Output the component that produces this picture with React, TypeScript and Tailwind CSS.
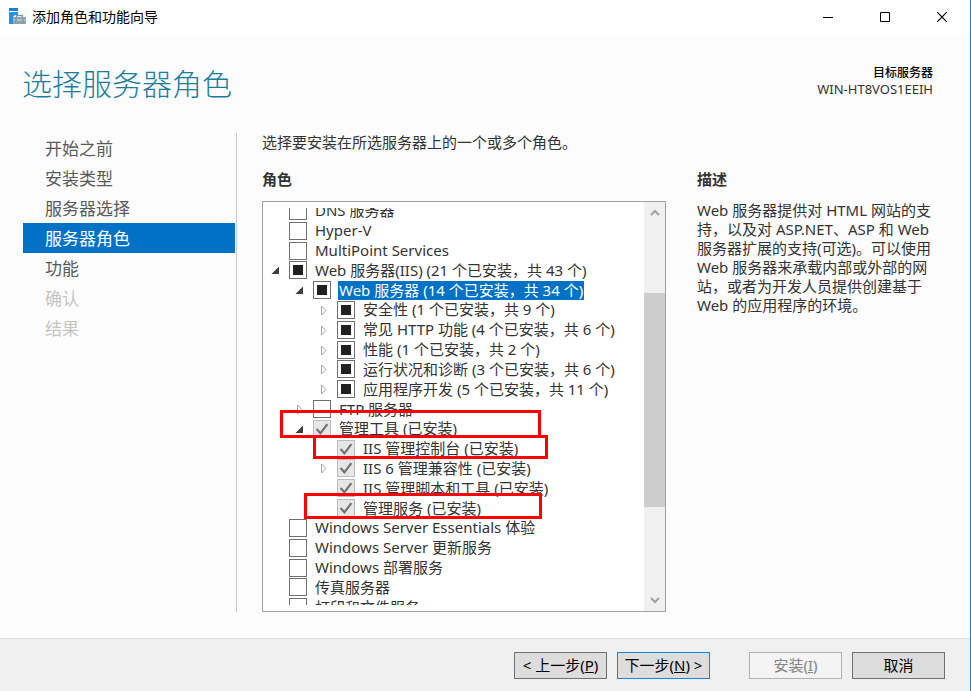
import { clsx } from "clsx";

type CheckState = "empty" | "partial" | "installed";
type ArrowState = "open" | "closed";

interface Role {
  label: string;
  level: 0 | 1 | 2;
  state: CheckState;
  arrow?: ArrowState;
  selected?: boolean;
}

const steps = [
  { label: "开始之前" },
  { label: "安装类型" },
  { label: "服务器选择" },
  { label: "服务器角色", active: true },
  { label: "功能" },
  { label: "确认", disabled: true },
  { label: "结果", disabled: true },
];

const roles: Role[] = [
  { label: "DNS 服务器", level: 0, state: "empty" },
  { label: "Hyper-V", level: 0, state: "empty" },
  { label: "MultiPoint Services", level: 0, state: "empty" },
  { label: "Web 服务器(IIS) (21 个已安装，共 43 个)", level: 0, state: "partial", arrow: "open" },
  { label: "Web 服务器 (14 个已安装，共 34 个)", level: 1, state: "partial", arrow: "open", selected: true },
  { label: "安全性 (1 个已安装，共 9 个)", level: 2, state: "partial", arrow: "closed" },
  { label: "常见 HTTP 功能 (4 个已安装，共 6 个)", level: 2, state: "partial", arrow: "closed" },
  { label: "性能 (1 个已安装，共 2 个)", level: 2, state: "partial", arrow: "closed" },
  { label: "运行状况和诊断 (3 个已安装，共 6 个)", level: 2, state: "partial", arrow: "closed" },
  { label: "应用程序开发 (5 个已安装，共 11 个)", level: 2, state: "partial", arrow: "closed" },
  { label: "FTP 服务器", level: 1, state: "empty", arrow: "closed" },
  { label: "管理工具 (已安装)", level: 1, state: "installed", arrow: "open" },
  { label: "IIS 管理控制台 (已安装)", level: 2, state: "installed" },
  { label: "IIS 6 管理兼容性 (已安装)", level: 2, state: "installed", arrow: "closed" },
  { label: "IIS 管理脚本和工具 (已安装)", level: 2, state: "installed" },
  { label: "管理服务 (已安装)", level: 2, state: "installed" },
  { label: "Windows Server Essentials 体验", level: 0, state: "empty" },
  { label: "Windows Server 更新服务", level: 0, state: "empty" },
  { label: "Windows 部署服务", level: 0, state: "empty" },
  { label: "传真服务器", level: 0, state: "empty" },
  { label: "打印和文件服务", level: 0, state: "empty" },
];

const indent = { 0: "pl-2", 1: "pl-8", 2: "pl-14" };

function WizardIcon() {
  return (
    <svg width="18" height="18" viewBox="0 0 18 18" fill="none">
      <path d="M0 0h9v3H0z" fill="#1c84cf" />
      <path d="M0 4h9v3H6L4 9v7H0z" fill="#2793dd" />
      <path d="M7.500 9.500V7.500h6v2" stroke="#8297a6" strokeWidth="1.300" />
      <rect x="4" y="9" width="13" height="7" rx="1" fill="#8da2b0" />
      <path d="M4.500 12h12" stroke="#dce5ea" />
      <path d="M7 11v2M14 11v2" stroke="#5f7888" />
    </svg>
  );
}

function Arrow({ state }: { state: ArrowState }) {
  return (
    <button type="button" aria-label={state === "open" ? "折叠" : "展开"}>
      <svg width="9" height="10" viewBox="0 0 9 10">
        {state === "open" ? (
          <path d="M8 1.500V9H0.500z" fill="#3c3c3c" />
        ) : (
          <path d="M2.500 1l4.500 4.500L2.500 10z" fill="#fff" stroke="#a3a3a3" />
        )}
      </svg>
    </button>
  );
}

function CheckBox({ id, state }: { id: string; state: CheckState }) {
  return (
    <span className="relative grid size-[18px] shrink-0 place-items-center">
      <input
        id={id}
        type="checkbox"
        defaultChecked={state === "installed"}
        disabled={state === "installed"}
        className={clsx(
          "absolute inset-0 appearance-none border",
          state === "installed" ? "border-[#bcbcbc] bg-[#e6e6e6]" : "border-[#707070] bg-white"
        )}
      />
      {state === "partial" && <span className="pointer-events-none relative size-[10px] bg-[#212121]" />}
      {state === "installed" && (
        <svg className="pointer-events-none relative" width="14" height="14" viewBox="0 0 13 13" fill="none">
          <path d="M1.500 6.500l3.500 4L11.500 2" stroke="#707070" strokeWidth="2" />
        </svg>
      )}
    </span>
  );
}

function RoleRow({ role, id }: { role: Role; id: string }) {
  return (
    <li className={clsx("flex min-h-0 flex-1 items-center", indent[role.level])}>
      <span className="flex w-[18px] shrink-0 items-center">{role.arrow && <Arrow state={role.arrow} />}</span>
      <CheckBox id={id} state={role.state} />
      <label
        htmlFor={id}
        className={clsx("ml-[7px] whitespace-nowrap px-px leading-[19px]", role.selected && "bg-[#0072c6] text-white")}
      >
        {role.label}
      </label>
    </li>
  );
}

function ScrollBar() {
  return (
    <div className="flex w-[21px] shrink-0 flex-col bg-[#f0f0f0]">
      <button type="button" aria-label="向上滚动" className="grid h-[21px] place-items-center">
        <svg width="10" height="7" viewBox="0 0 10 7" fill="none">
          <path d="M1 6l4-4 4 4" stroke="#a0a0a0" strokeWidth="2" />
        </svg>
      </button>
      <div className="flex-1 pt-[70px]">
        <div className="h-[214px] bg-[#cdcdcd]" />
      </div>
      <button type="button" aria-label="向下滚动" className="grid h-[21px] place-items-center">
        <svg width="10" height="7" viewBox="0 0 10 7" fill="none">
          <path d="M1 1l4 4 4-4" stroke="#a0a0a0" strokeWidth="2" />
        </svg>
      </button>
    </div>
  );
}

function TitleBar() {
  return (
    <header className="flex h-9 items-center gap-px bg-white pb-[3px] pl-[9px] text-black">
      <WizardIcon />
      <span className="ml-1 flex-1 text-[14px]">添加角色和功能向导</span>
      <button type="button" aria-label="最小化" className="grid h-8 w-14 place-items-center">
        <svg width="10" height="10" viewBox="0 0 10 10" stroke="#000">
          <path d="M0 5.500h10" />
        </svg>
      </button>
      <button type="button" aria-label="最大化" className="grid h-8 w-14 place-items-center">
        <svg width="10" height="10" viewBox="0 0 10 10" fill="none" stroke="#000">
          <path d="M.5.5h9v9h-9z" />
        </svg>
      </button>
      <button type="button" aria-label="关闭" className="grid h-8 w-14 place-items-center">
        <svg width="10" height="10" viewBox="0 0 10 10" stroke="#000" strokeWidth="1.200">
          <path d="M0 0l10 10M10 0L0 10" />
        </svg>
      </button>
    </header>
  );
}

const buttonBase = "h-[27px] w-[93px] whitespace-nowrap border text-center leading-[25px]";

export default function App() {
  return (
    <div className="flex min-h-screen flex-col border-r border-[#1883d7] bg-[#fcfcfc] font-['Noto_Sans','Noto_Sans_CJK_SC',sans-serif] text-[15px] text-[#333]">
      <TitleBar />

      <div className="flex h-[97px] items-start justify-between pl-[22px] pr-[37px] pt-7">
        <h1 className="text-[30px] font-light leading-10 text-[#1c7c9c]">选择服务器角色</h1>
        <div className="pt-px text-right leading-4">
          <div className="text-[12px] font-medium leading-4 text-black">目标服务器</div>
          <div className="text-[13px] leading-4">WIN-HT8VOS1EEIH</div>
        </div>
      </div>

      <div className="flex pb-[25px] pl-[23px] pr-[33px]">
        <nav className="w-[214px] shrink-0 border-r border-[#c8c8c8] pr-px">
          {steps.map((step) => (
            <a
              key={step.label}
              href="#"
              className={clsx(
                "block pl-[22px] pt-[2px] text-[17px] leading-[28px]",
                step.active && "bg-[#0072c6] text-white",
                step.disabled && "text-[#c4c4c4]",
                !step.active && !step.disabled && "text-[#5a5a5a]"
              )}
            >
              {step.label}
            </a>
          ))}
        </nav>

        <main className="ml-[25px] flex-1">
          <p className="leading-[18px]">选择要安装在所选服务器上的一个或多个角色。</p>
          <h2 className="mt-[18px] font-bold leading-5">角色</h2>
          <div className="relative mt-3 flex h-[411px] border border-[#a0a0a0] bg-white">
            <div className="my-[6px] min-w-0 flex-1 overflow-hidden">
              <ul className="-mt-[7px] flex h-[416px] flex-col">
                {roles.map((role, i) => (
                  <RoleRow key={role.label} role={role} id={`role-${i}`} />
                ))}
              </ul>
            </div>
            <ScrollBar />
            <div className="pointer-events-none absolute left-[17px] top-[208px] h-7 w-[261px] border-3 border-[#f00]" />
            <div className="pointer-events-none absolute left-[50px] top-[233px] h-6 w-[235px] border-3 border-[#f00]" />
            <div className="pointer-events-none absolute left-[41px] top-[291px] h-[26px] w-[238px] border-3 border-[#f00]" />
          </div>
        </main>

        <aside className="ml-[31px] w-[240px] shrink-0 pt-9">
          <h2 className="font-bold leading-5">描述</h2>
          <p className="mt-3 leading-[19px]">
            Web 服务器提供对 HTML 网站的支持，以及对 ASP.NET、ASP 和 Web 服务器扩展的支持(可选)。可以使用 Web
            服务器来承载内部或外部的网站，或者为开发人员提供创建基于 Web 的应用程序的环境。
          </p>
        </aside>
      </div>

      <footer className="mt-auto flex h-[53px] justify-end border-t border-[#dfdfdf] bg-[#f0f0f0] pr-[25px] pt-[13px] text-black">
        <button type="button" className={clsx(buttonBase, "border-[#707070] bg-[#ddd]")}>
          &lt; 上一步(<u>P</u>)
        </button>
        <button type="button" className={clsx(buttonBase, "ml-[10px] border-[#1883d7] bg-[#ddd]")}>
          下一步(<u>N</u>) &gt;
        </button>
        <button type="button" disabled className={clsx(buttonBase, "ml-[39px] border-[#adb2b5] bg-[#f4f4f4] text-[#838383]")}>
          安装(<u>I</u>)
        </button>
        <button type="button" className={clsx(buttonBase, "ml-[10px] border-[#707070] bg-[#ddd]")}>
          取消
        </button>
      </footer>
    </div>
  );
}
